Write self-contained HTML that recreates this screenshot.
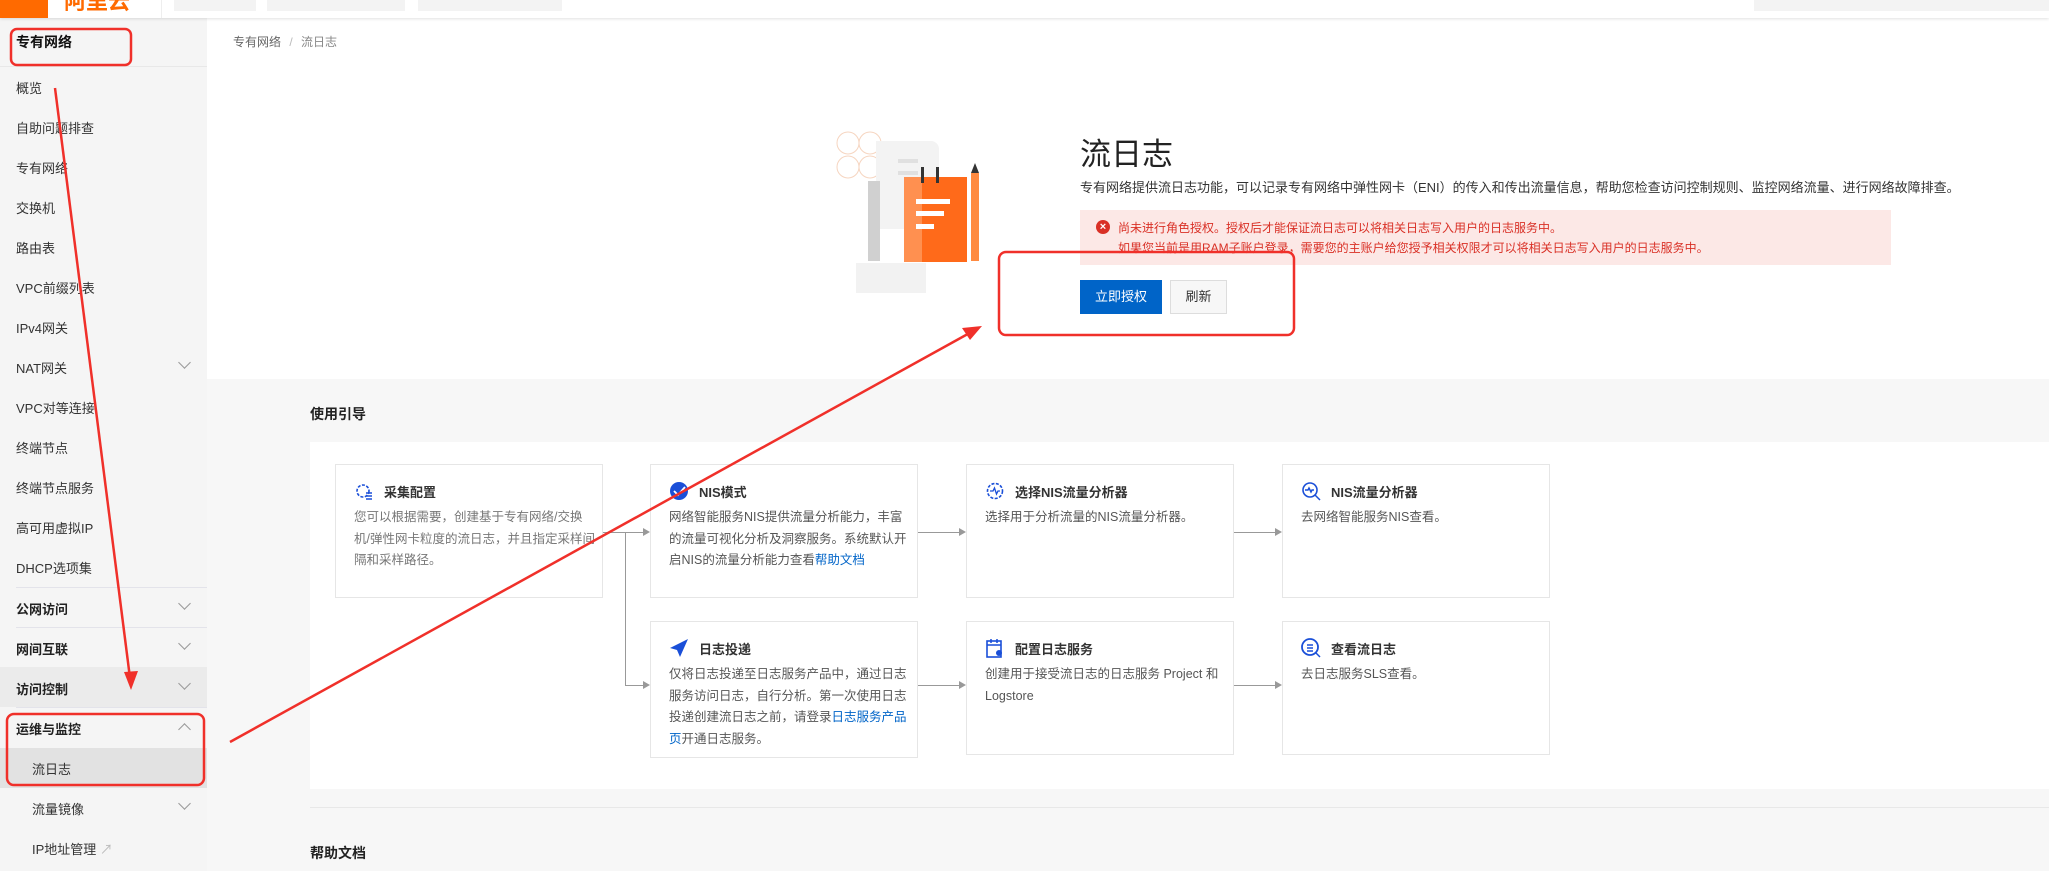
<!DOCTYPE html>
<html><head><meta charset="utf-8"><style>
*{margin:0;padding:0;box-sizing:border-box}
body{width:2049px;height:871px;overflow:hidden;position:relative;background:#fff;font-family:"Liberation Sans","Noto Sans CJK SC",sans-serif;color:#333}
.a{position:absolute}
.side{left:0;top:18px;width:207px;height:853px;background:#f5f5f5}
.it{position:absolute;left:16px;font-size:13px;color:#333}
.chev{position:absolute;left:180px;width:9px;height:9px;border-right:1.3px solid #999;border-bottom:1.3px solid #999;transform:rotate(45deg)}
.sep{position:absolute;left:16px;width:191px;height:1px;background:#e3e3ea}
.card{position:absolute;width:268px;border:1px solid #e6e6e6;background:#fff;padding:0 18px}
.ct{position:absolute;left:48px;top:17px;font-size:13px;font-weight:bold;color:#333}
.cb{position:absolute;left:18px;top:42px;right:6px;font-size:12.5px;line-height:21.5px;color:#555}
.ic{position:absolute;left:18px;top:16px;width:20px;height:20px}
.hl{position:absolute;height:1px;background:#999}
.vl{position:absolute;width:1px;background:#999}
.ah{position:absolute;width:0;height:0;border-top:4px solid transparent;border-bottom:4px solid transparent;border-left:7px solid #999}
a{color:#0064c8;text-decoration:none}
</style></head><body>
<!-- top bar -->
<div class="a" style="left:0;top:0;width:2049px;height:18px;background:#fff;box-shadow:0 1px 3px rgba(0,0,0,.12);z-index:3;overflow:hidden">
<div class="a" style="left:0;top:0;width:48px;height:18px;background:#ff6a00"></div>
<div class="a" style="left:64px;top:-16px;color:#ff6a00;font-size:22px;font-weight:bold">阿里云</div>
<div class="a" style="left:161px;top:0;width:1px;height:18px;background:#eee"></div>
<div class="a" style="left:174px;top:0;width:82px;height:11px;background:#f3f3f3"></div>
<div class="a" style="left:267px;top:0;width:138px;height:11px;background:#f3f3f3"></div>
<div class="a" style="left:418px;top:0;width:144px;height:11px;background:#f3f3f3"></div>
<div class="a" style="left:1754px;top:0;width:295px;height:11px;background:#f3f3f3"></div>
</div>
<!-- sidebar -->
<div class="a side">
<div class="it" style="top:14px;font-weight:bold;font-size:14px;color:#111">专有网络</div>
<div class="a" style="left:0;top:48px;width:207px;height:1px;background:#e8e8e8"></div>
<div class="it" style="top:60px">概览</div>
<div class="it" style="top:100px">自助问题排查</div>
<div class="it" style="top:140px">专有网络</div>
<div class="it" style="top:180px">交换机</div>
<div class="it" style="top:220px">路由表</div>
<div class="it" style="top:260px">VPC前缀列表</div>
<div class="it" style="top:300px">IPv4网关</div>
<div class="it" style="top:340px">NAT网关</div><div class="chev" style="top:340px"></div>
<div class="it" style="top:380px">VPC对等连接</div>
<div class="it" style="top:420px">终端节点</div>
<div class="it" style="top:460px">终端节点服务</div>
<div class="it" style="top:500px">高可用虚拟IP</div>
<div class="it" style="top:540px">DHCP选项集</div>
<div class="sep" style="top:569px"></div>
<div class="it" style="top:581px;font-weight:bold;color:#222">公网访问</div><div class="chev" style="top:581px"></div>
<div class="sep" style="top:609px"></div>
<div class="it" style="top:621px;font-weight:bold;color:#222">网间互联</div><div class="chev" style="top:621px"></div>
<div class="a" style="left:0;top:649px;width:207px;height:40px;background:#ebebeb"></div>
<div class="it" style="top:661px;font-weight:bold;color:#222">访问控制</div><div class="chev" style="top:661px"></div>
<div class="sep" style="top:689px"></div>
<div class="it" style="top:701px;font-weight:bold;color:#222">运维与监控</div><div class="chev" style="top:707px;transform:rotate(-135deg)"></div>
<div class="a" style="left:0;top:730px;width:207px;height:40px;background:#e2e2e2"></div>
<div class="it" style="left:32px;top:741px">流日志</div>
<div class="it" style="left:32px;top:781px">流量镜像</div><div class="chev" style="top:781px"></div>
<div class="it" style="left:32px;top:821px">IP地址管理 <span style="color:#bbb">↗</span></div>
</div>
<div class="a" style="left:207px;top:627px;width:18px;height:80px;background:#ececec;clip-path:polygon(0 0,100% 12%,100% 88%,0 100%)"></div>
<div class="a" style="left:212px;top:650px;color:#aaa;font-size:14px">‹</div>
<!-- main -->
<div class="a" style="left:207px;top:18px;width:1842px;height:361px;background:#fff"></div>
<div class="a" style="left:233px;top:33px;font-size:12px;color:#666">专有网络 <span style="color:#bbb;margin:0 5px">/</span> <span style="color:#888">流日志</span></div>
<div class="a" style="left:207px;top:379px;width:1842px;height:492px;background:#f7f7f7"></div>
<!-- illustration -->
<svg class="a" style="left:836px;top:131px" width="200" height="200">
<g fill="none" stroke="#f6d5c0" stroke-width="1"><circle cx="12" cy="12" r="11"/><circle cx="34" cy="12" r="11"/><circle cx="12" cy="36" r="11"/><circle cx="34" cy="36" r="11"/><circle cx="56" cy="36" r="11"/></g>
<rect x="20" y="132" width="70" height="30" fill="#f2f2f2"/>
<path d="M40 10h55a8 8 0 0 1 8 8v80H40z" fill="#f3f3f3"/>
<rect x="62" y="28" width="20" height="4" fill="#e0e0e0"/><rect x="62" y="40" width="20" height="4" fill="#e0e0e0"/>
<rect x="32" y="50" width="12" height="80" fill="#d0d0d0"/>
<rect x="68" y="46" width="63" height="85" fill="#ff6a1a"/>
<rect x="68" y="46" width="18" height="85" fill="#ff9050"/>
<rect x="85" y="36" width="3" height="16" fill="#333"/><rect x="100" y="36" width="3" height="16" fill="#333"/>
<rect x="80" y="68" width="34" height="5" fill="#fff"/><rect x="80" y="80" width="28" height="5" fill="#fff"/><rect x="80" y="93" width="18" height="5" fill="#fff"/>
<rect x="135" y="42" width="8" height="88" fill="#ff8a40"/><path d="M135 42l4-10 4 10z" fill="#333"/>
</svg>
<div class="a" style="left:1080px;top:129px;font-size:31px;color:#222">流日志</div>
<div class="a" style="left:1080px;top:177px;font-size:13px;color:#333;white-space:nowrap">专有网络提供流日志功能，可以记录专有网络中弹性网卡（ENI）的传入和传出流量信息，帮助您检查访问控制规则、监控网络流量、进行网络故障排查。</div>
<div class="a" style="left:1080px;top:210px;width:811px;height:55px;background:#fce8e6"></div>
<div class="a" style="left:1096px;top:220px;width:14px;height:14px;border-radius:50%;background:#d93026;color:#fff;font-size:11px;line-height:14px;text-align:center;font-weight:bold">×</div>
<div class="a" style="left:1118px;top:219px;font-size:12px;color:#d93026;white-space:nowrap">尚未进行角色授权。授权后才能保证流日志可以将相关日志写入用户的日志服务中。</div>
<div class="a" style="left:1118px;top:239px;font-size:12px;color:#d93026;white-space:nowrap">如果您当前是用RAM子账户登录，需要您的主账户给您授予相关权限才可以将相关日志写入用户的日志服务中。</div>
<div class="a" style="left:1080px;top:280px;width:82px;height:34px;background:#0064c8;color:#fff;font-size:13px;line-height:34px;text-align:center">立即授权</div>
<div class="a" style="left:1170px;top:280px;width:57px;height:34px;background:#f7f7f7;border:1px solid #ddd;font-size:13px;line-height:32px;text-align:center;color:#333">刷新</div>
<!-- guide -->
<div class="a" style="left:310px;top:404px;font-size:14px;font-weight:bold;color:#222">使用引导</div>
<div class="a" style="left:310px;top:442px;width:1739px;height:347px;background:#fff"></div>
<div class="a" style="left:310px;top:807px;width:1739px;height:1px;background:#e8e8e8"></div>
<div class="a" style="left:310px;top:843px;font-size:14px;font-weight:bold;color:#222">帮助文档</div>

<div class="card" style="left:335px;top:464px;height:134px"><svg class="ic" viewBox="0 0 20 20"><circle cx="9" cy="10" r="6" fill="none" stroke="#1a4fd8" stroke-width="1.6" stroke-dasharray="3 1.5"/><path d="M12 12h6M12 15h6M12 18h6" stroke="#1a4fd8" stroke-width="1.5"/></svg><div class="ct">采集配置</div><div class="cb" style="color:#777">您可以根据需要，创建基于专有网络/交换机/弹性网卡粒度的流日志，并且指定采样间隔和采样路径。</div></div>
<div class="card" style="left:650px;top:464px;height:134px"><svg class="ic" viewBox="0 0 20 20"><circle cx="10" cy="10" r="9" fill="#1a4fd8"/><path d="M5 10l4 4 7-8" stroke="#fff" stroke-width="1.8" fill="none"/></svg><div class="ct">NIS模式</div><div class="cb">网络智能服务NIS提供流量分析能力，丰富的流量可视化分析及洞察服务。系统默认开启NIS的流量分析能力查看<a>帮助文档</a></div></div>
<div class="card" style="left:966px;top:464px;height:134px"><svg class="ic" viewBox="0 0 20 20"><circle cx="10" cy="10" r="7.5" fill="none" stroke="#1a4fd8" stroke-width="1.6" stroke-dasharray="3 1.5"/><path d="M5 10h3l1.5-3 2 6 1.5-3h2" stroke="#1a4fd8" stroke-width="1.3" fill="none"/></svg><div class="ct">选择NIS流量分析器</div><div class="cb">选择用于分析流量的NIS流量分析器。</div></div>
<div class="card" style="left:1282px;top:464px;height:134px"><svg class="ic" viewBox="0 0 20 20"><circle cx="9" cy="9" r="7" fill="none" stroke="#1a4fd8" stroke-width="1.6"/><path d="M14 14l5 5M4 9h3l1-2 2 4 1-2h2" stroke="#1a4fd8" stroke-width="1.5" fill="none"/></svg><div class="ct">NIS流量分析器</div><div class="cb">去网络智能服务NIS查看。</div></div>
<div class="card" style="left:650px;top:621px;height:137px"><svg class="ic" viewBox="0 0 20 20"><path d="M19 1L1 10l7 2 3 7z" fill="#1a4fd8"/></svg><div class="ct">日志投递</div><div class="cb">仅将日志投递至日志服务产品中，通过日志服务访问日志，自行分析。第一次使用日志投递创建流日志之前，请登录<a>日志服务产品页</a>开通日志服务。</div></div>
<div class="card" style="left:966px;top:621px;height:134px"><svg class="ic" viewBox="0 0 20 20"><rect x="2" y="3" width="14" height="16" fill="none" stroke="#1a4fd8" stroke-width="1.6"/><path d="M2 7h14M6 1v4M12 1v4" stroke="#1a4fd8" stroke-width="1.5"/><circle cx="14" cy="15" r="3" fill="#1a4fd8"/></svg><div class="ct">配置日志服务</div><div class="cb">创建用于接受流日志的日志服务 Project 和 Logstore</div></div>
<div class="card" style="left:1282px;top:621px;height:134px"><svg class="ic" viewBox="0 0 20 20"><circle cx="9" cy="9" r="8" fill="none" stroke="#1a4fd8" stroke-width="1.8"/><path d="M6 7h6M6 10h6M6 13h6M15 15l4 4" stroke="#1a4fd8" stroke-width="1.5"/></svg><div class="ct">查看流日志</div><div class="cb">去日志服务SLS查看。</div></div>
<!-- connectors -->
<div class="hl" style="left:603px;top:532px;width:22px"></div>
<div class="vl" style="left:625px;top:532px;height:153px"></div>
<div class="hl" style="left:625px;top:532px;width:20px"></div><div class="ah" style="left:643px;top:528px"></div>
<div class="hl" style="left:625px;top:685px;width:20px"></div><div class="ah" style="left:643px;top:681px"></div>
<div class="hl" style="left:918px;top:532px;width:42px"></div><div class="ah" style="left:959px;top:528px"></div>
<div class="hl" style="left:1234px;top:532px;width:42px"></div><div class="ah" style="left:1275px;top:528px"></div>
<div class="hl" style="left:918px;top:685px;width:42px"></div><div class="ah" style="left:959px;top:681px"></div>
<div class="hl" style="left:1234px;top:685px;width:42px"></div><div class="ah" style="left:1275px;top:681px"></div>
<!-- annotations -->
<svg class="a" style="left:0;top:0;z-index:5" width="2049" height="871">
<g fill="none" stroke="#f0302a" stroke-width="2.5">
<rect x="11" y="29" width="120" height="36" rx="6"/>
<rect x="999" y="252" width="295" height="83" rx="7"/>
<rect x="7" y="714" width="197" height="71" rx="7"/>
<path d="M55 88L130 678"/>
<path d="M230 742L975 330"/>
</g>
<path d="M131 690l-7-18 14-1z" fill="#f0302a"/>
<path d="M982 326l-20 2 8 12z" fill="#f0302a"/>
</svg>
</body></html>
